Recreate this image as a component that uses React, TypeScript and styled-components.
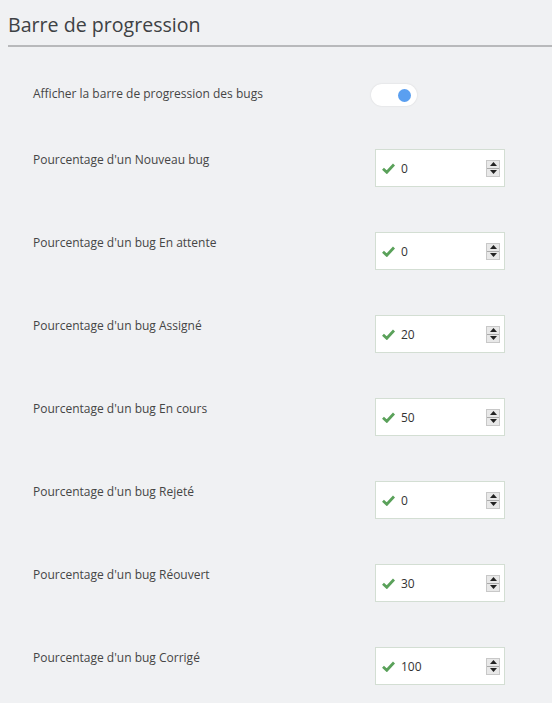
import React from 'react';
import styled, { createGlobalStyle } from 'styled-components';

const GlobalStyle = createGlobalStyle`
  html, body {
    margin: 0;
    padding: 0;
    background: #f0f1f3;
  }
  body {
    font-family: "Open Sans", "Noto Sans", sans-serif;
    color: #444;
  }
`;

type RowType = {
  label: string
  value: string
}

const rows: RowType[] = [
  { label: "Pourcentage d'un Nouveau bug", value: '0' },
  { label: "Pourcentage d'un bug En attente", value: '0' },
  { label: "Pourcentage d'un bug Assigné", value: '20' },
  { label: "Pourcentage d'un bug En cours", value: '50' },
  { label: "Pourcentage d'un bug Rejeté", value: '0' },
  { label: "Pourcentage d'un bug Réouvert", value: '30' },
  { label: "Pourcentage d'un bug Corrigé", value: '100' },
];

const Check = () => (
  <svg width="13" height="11" viewBox="0 0 13 11">
    <path d="M1 5.8 L4.8 9.3 L12 1.5" fill="none" stroke="#5aa15a" strokeWidth="2.8" strokeLinejoin="miter" />
  </svg>
);

const Spinner = () => (
  <SpinBox>
    <SpinHalf>
      <svg width="7" height="4" viewBox="0 0 7 4"><path d="M0 4 L3.5 0 L7 4 Z" fill="#222" /></svg>
    </SpinHalf>
    <SpinHalf>
      <svg width="7" height="4" viewBox="0 0 7 4"><path d="M0 0 L3.5 4 L7 0 Z" fill="#222" /></svg>
    </SpinHalf>
  </SpinBox>
);

export default function App() {
  return (
    <Page>
      <GlobalStyle />
      <Header>
        <Title>Barre de progression</Title>
      </Header>
      <List>
        <ToggleRow>
          <Label>Afficher la barre de progression des bugs</Label>
          <Toggle>
            <Knob />
          </Toggle>
        </ToggleRow>
        {rows.map((r) => (
          <Row key={r.label}>
            <Label>{r.label}</Label>
            <Field>
              <Check />
              <Value>{r.value}</Value>
              <Spinner />
            </Field>
          </Row>
        ))}
      </List>
    </Page>
  );
}

const Page = styled.div`
  width: 552px;
  min-height: 703px;
  padding-left: 8px;
  box-sizing: border-box;
`;

const Header = styled.div`
  height: 47px;
  border-bottom: 2px solid #b8b9bb;
  display: flex;
  align-items: flex-end;
  padding-bottom: 8px;
  box-sizing: border-box;
`;

const Title = styled.h2`
  margin: 0;
  font-size: 19.6px;
  font-weight: 400;
  color: #3e4144;
  line-height: 24px;
`;

const List = styled.div`
  display: flex;
  flex-direction: column;
  padding-left: 25px;
  padding-top: 39px;
`;

const ToggleRow = styled.div`
  display: flex;
  align-items: flex-start;
  height: 66px;
`;

const Row = styled.div`
  display: flex;
  align-items: flex-start;
  height: 83px;
`;

const Label = styled.div`
  width: 342px;
  font-size: 12px;
  line-height: 16px;
  color: #454545;
`;

const Toggle = styled.div`
  width: 46px;
  height: 22px;
  margin-left: -4px;
  margin-top: -2px;
  border-radius: 11px;
  background: #fff;
  box-shadow: 0 0 2px rgba(0, 0, 0, 0.12);
  display: flex;
  align-items: center;
  justify-content: flex-end;
  padding-right: 6px;
  box-sizing: border-box;
`;

const Knob = styled.div`
  width: 13px;
  height: 13px;
  border-radius: 50%;
  background: #5a9ff0;
`;

const Field = styled.div`
  width: 130px;
  height: 38px;
  margin-top: -3px;
  border: 1px solid #d3ded3;
  background: #fff;
  display: flex;
  align-items: center;
  padding: 0 4px 0 6px;
  box-sizing: border-box;
`;

const Value = styled.span`
  flex: 1;
  margin-left: 6px;
  font-size: 12px;
  color: #333;
`;

const SpinBox = styled.div`
  width: 14px;
  height: 17px;
  display: flex;
  flex-direction: column;
  border: 1px solid #c8c8c8;
  background: #e8e8e8;
  box-sizing: border-box;
`;

const SpinHalf = styled.div`
  flex: 1;
  display: flex;
  align-items: center;
  justify-content: center;
  & + & {
    border-top: 1px solid #aaa;
  }
`;
